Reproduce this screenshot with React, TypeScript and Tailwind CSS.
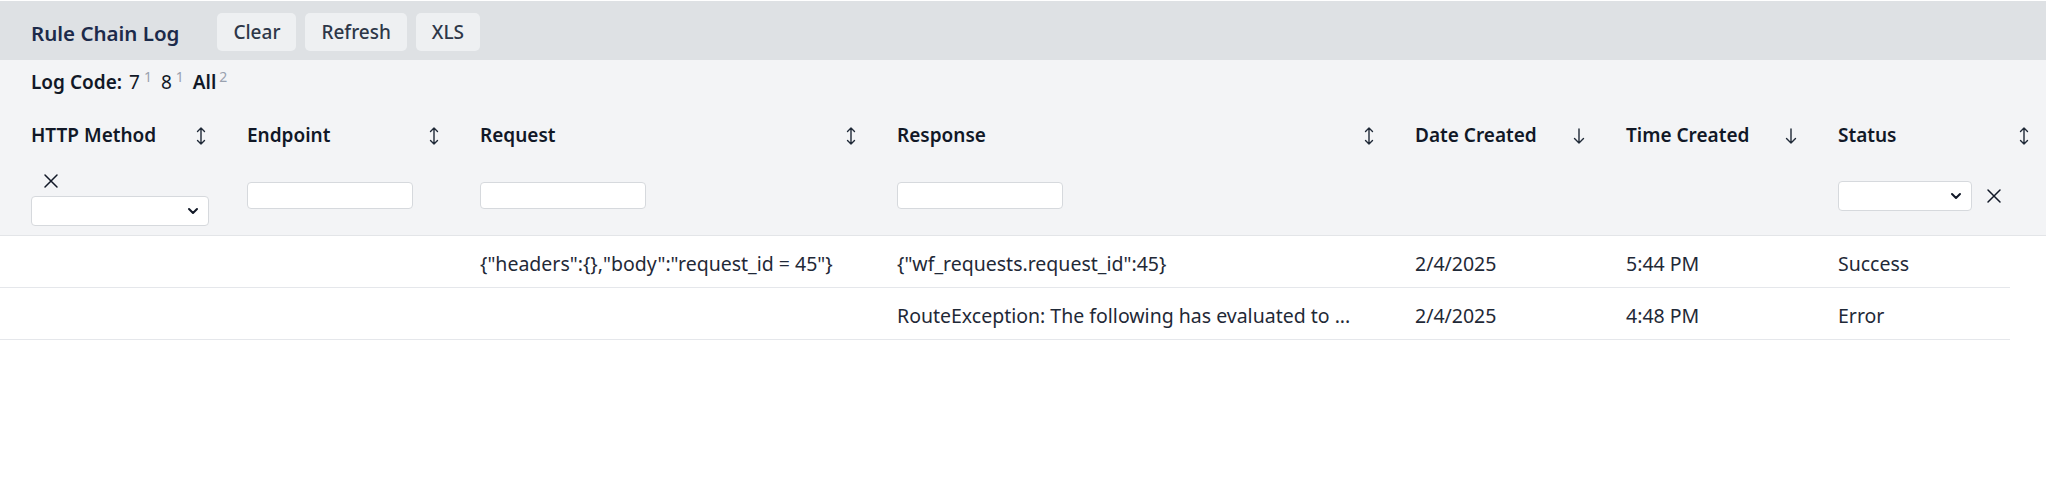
import React from "react";

const cols = "grid grid-cols-[216px_233px_417px_518px_211px_212px_1fr]";

const SortBoth = () => (
  <svg width="10" height="20" viewBox="0 0 10 20" fill="none" stroke="#1f2937" strokeWidth="1.4" strokeLinecap="round" strokeLinejoin="round">
    <path d="M5 2v16M1.5 5.5L5 2l3.5 3.5M1.5 14.5L5 18l3.5-3.5" />
  </svg>
);

const SortDown = () => (
  <svg width="12" height="20" viewBox="0 0 12 20" fill="none" stroke="#1f2937" strokeWidth="1.4" strokeLinecap="round" strokeLinejoin="round">
    <path d="M6 3v14M1.5 12.5L6 17l4.5-4.5" />
  </svg>
);

const Cross = () => (
  <svg width="16" height="16" viewBox="0 0 16 16" fill="none" stroke="#111827" strokeWidth="1.5" strokeLinecap="round">
    <path d="M2 2l12 12M14 2L2 14" />
  </svg>
);

const Select = ({ width }: { width: string }) => (
  <div className={`relative ${width} h-[30px]`}>
    <select className="appearance-none w-full h-full bg-white border border-[#d6d9dd] rounded-[4px]" />
    <svg className="absolute right-[10px] top-[11px] pointer-events-none" width="12" height="8" viewBox="0 0 12 8" fill="none" stroke="#111827" strokeWidth="2" strokeLinecap="round" strokeLinejoin="round">
      <path d="M2 2l4 4 4-4" />
    </svg>
  </div>
);

const TextFilter = () => (
  <input className="w-[166px] h-[27px] bg-white border border-[#d6d9dd] rounded-[4px] mt-[14px]" />
);

const headers: { label: string; sort: "both" | "down" }[] = [
  { label: "HTTP Method", sort: "both" },
  { label: "Endpoint", sort: "both" },
  { label: "Request", sort: "both" },
  { label: "Response", sort: "both" },
  { label: "Date Created", sort: "down" },
  { label: "Time Created", sort: "down" },
  { label: "Status", sort: "both" },
];

const rows = [
  {
    method: "",
    endpoint: "",
    request: '{"headers":{},"body":"request_id = 45"}',
    response: '{"wf_requests.request_id":45}',
    date: "2/4/2025",
    time: "5:44 PM",
    status: "Success",
  },
  {
    method: "",
    endpoint: "",
    request: "",
    response: "RouteException: The following has evaluated to ...",
    date: "2/4/2025",
    time: "4:48 PM",
    status: "Error",
  },
];

export default function App() {
  return (
    <div className="min-h-screen bg-white pt-px text-[19px] text-gray-800" style={{ fontFamily: '"Noto Sans", "Open Sans", sans-serif' }}>
      <div className="h-[59px] bg-[#dee1e4] flex items-start pt-[12px] pl-[31px]">
        <h1 className="h-[40px] flex items-center text-[20.5px] font-semibold text-[#1c2a4a] mr-[38px]">Rule Chain Log</h1>
        <div className="flex gap-[9px]">
          <button className="h-[38px] px-[16px] rounded-[5px] bg-[#eef0f2] font-medium text-[#2d3748]">Clear</button>
          <button className="h-[38px] px-[16px] rounded-[5px] bg-[#eef0f2] font-medium text-[#2d3748]">Refresh</button>
          <button className="h-[38px] px-[16px] rounded-[5px] bg-[#eef0f2] font-medium text-[#2d3748]">XLS</button>
        </div>
      </div>

      <div className="bg-[#f3f4f6] border-b border-[#e3e5e8]">
        <div className="h-[43px] pt-[2px] flex items-center pl-[31px] gap-[9px] text-[#111827]">
          <span className="font-semibold -mr-[2px]">Log Code:</span>
          <span>7<sup className="text-[14px] text-gray-400 ml-[4px]">1</sup></span>
          <span>8<sup className="text-[14px] text-gray-400 ml-[4px]">1</sup></span>
          <span className="font-semibold">All<sup className="text-[14px] font-normal text-gray-400 ml-[3px]">2</sup></span>
        </div>

        <div className={`${cols} pl-[31px] h-[65px] items-center`}>
          {headers.map((h, i) => (
            <div key={h.label} className={`flex items-center justify-between ${i === 6 ? "pr-[17px]" : "pr-[41px]"}`}>
              <span className="font-semibold text-[#111827]">{h.label}</span>
              {h.sort === "both" ? <SortBoth /> : <SortDown />}
            </div>
          ))}
        </div>

        <div className={`${cols} pl-[31px] h-[67px] items-start`}>
          <div className="flex flex-col">
            <div className="ml-[12px] mt-[5px] mb-[7px] h-[16px]">
              <Cross />
            </div>
            <Select width="w-[178px]" />
          </div>
          <div><TextFilter /></div>
          <div><TextFilter /></div>
          <div><TextFilter /></div>
          <div />
          <div />
          <div className="flex items-center gap-[14px] mt-[13px]">
            <Select width="w-[134px]" />
            <Cross />
          </div>
        </div>
      </div>

      <div className="w-[2010px] text-[19.5px]">
        {rows.map((r, i) => (
          <div key={i} className={`${cols} pl-[31px] h-[52px] pt-[5px] items-center border-b border-[#e5e7eb] text-[#1f2937]`}>
            <div>{r.method}</div>
            <div>{r.endpoint}</div>
            <div className="whitespace-nowrap">{r.request}</div>
            <div className="whitespace-nowrap">{r.response}</div>
            <div>{r.date}</div>
            <div>{r.time}</div>
            <div>{r.status}</div>
          </div>
        ))}
      </div>
    </div>
  );
}
